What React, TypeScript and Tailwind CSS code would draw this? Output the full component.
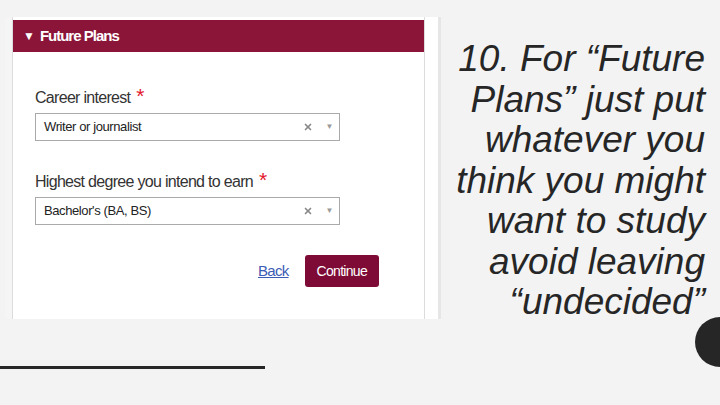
import { X } from 'lucide-react';

// ─── Select field ────────────────────────────────────────────

function SelectField({ label, value }: { label: string; value: string }) {
  return (
    <div className="flex flex-col">
      <div className="flex items-start text-[16px] leading-[22px] tracking-[-0.7px] text-[#333]">
        <span>{label}</span>
        <span className="ml-[6px] text-[21px] leading-[18px] text-[#e4172b]">*</span>
      </div>
      <div className="mt-[4px] flex h-[28px] w-[305px] items-center border border-[#aaa] bg-white pl-[8px] pr-[6px] text-[13px] tracking-[-0.4px] text-[#222]">
        <span className="flex-1">{value}</span>
        <X className="h-[10px] w-[10px] text-[#888]" strokeWidth={4} />
        <span className="ml-[12px] text-[8px] text-[#999]">▼</span>
      </div>
    </div>
  );
}

export default function App() {
  return (
    <div className="relative h-[405px] w-[720px] overflow-hidden bg-[#f3f3f3] font-['Liberation_Sans',Arial,sans-serif]">
      <div className="flex pt-[17px]">
        {/* Screenshot of the form */}
        <div className="ml-[5px] flex h-[302px] w-[436px] bg-white">
          <div className="w-[7px] bg-[#f5f5f5]" />
          <div className="flex w-[413px] flex-col border-x border-[#dcdcdc] pt-[3px]">
            <div className="flex h-[32px] items-center bg-[#8a1538] pl-[10px] text-white">
              <span className="text-[12px]">▼</span>
              <span className="ml-[5px] text-[15px] font-bold tracking-[-1px]">Future Plans</span>
            </div>
            <div className="flex flex-col pl-[22px] pt-[35px]">
              <SelectField label="Career interest" value="Writer or journalist" />
              <div className="mt-[30px]">
                <SelectField label="Highest degree you intend to earn" value="Bachelor's (BA, BS)" />
              </div>
              <div className="mt-[30px] flex items-center pl-[223px]">
                <a className="text-[15px] tracking-[-0.7px] text-[#3b5bb5] underline">Back</a>
                <button className="ml-[16px] h-[32px] rounded-[3px] bg-[#7d0b35] px-[12px] text-[14px] tracking-[-0.7px] text-white">
                  Continue
                </button>
              </div>
            </div>
          </div>
          <div className="w-[13px] bg-white" />
          <div className="w-[3px] bg-[#e6e6e6]" />
        </div>

        {/* Slide text */}
        <div className="flex-1 pr-[15px] pt-[22px] text-right text-[37px] italic leading-[40.5px] text-[#262626]">
          <div>10. For “Future</div>
          <div>Plans” just put</div>
          <div>whatever you</div>
          <div>think you might</div>
          <div>want to study</div>
          <div>avoid leaving</div>
          <div>“undecided”</div>
        </div>
      </div>

      <div className="mt-[43px] h-[3px] w-[265px] bg-[#262626]" />

      <div className="absolute left-[695px] top-[317px] h-[50px] w-[50px] rounded-full bg-[#262626]" />
    </div>
  );
}
